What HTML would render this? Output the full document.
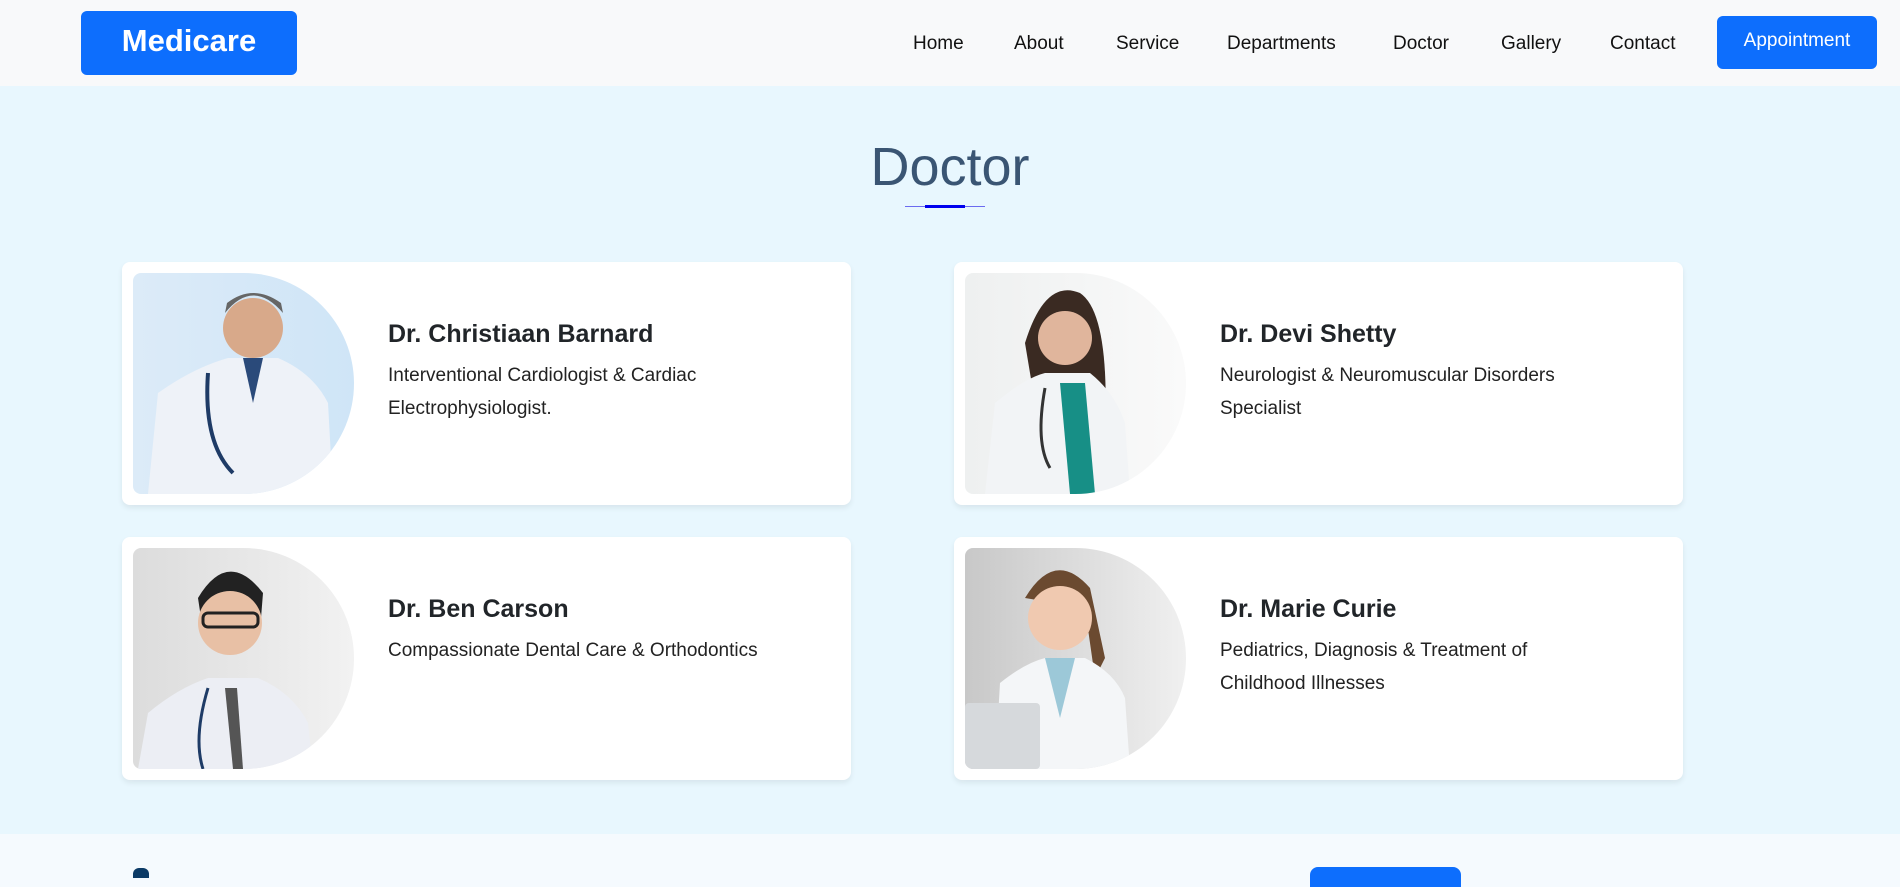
<!DOCTYPE html>
<html><head><meta charset="utf-8"><style>
*{box-sizing:border-box;margin:0;padding:0}
body{width:1900px;height:874px;overflow:hidden;font-family:"Segoe UI","Liberation Sans",sans-serif;background:#f5fafe;position:relative}
.nav{position:absolute;left:0;top:0;width:1900px;height:86px;background:#f8f9fa}
.logo{position:absolute;left:81px;top:11px;width:216px;height:64px;background:#0d6efd;border-radius:6px;color:#fff;font-weight:bold;font-size:31px;text-align:center;line-height:60px}
.nav a{position:absolute;top:28px;font-size:19px;color:#111;text-decoration:none;line-height:32px}
.btn{position:absolute;left:1717px;top:16px;width:160px;height:53px;background:#0d6efd;border-radius:6px;color:#fff;font-size:19px;text-align:center;line-height:50px}
.sec{position:absolute;left:0;top:86px;width:1900px;height:748px;background:#e8f7fe}
h1{position:absolute;left:0;width:1900px;top:132px;text-align:center;font-weight:300;font-size:54px;color:#3a5573;line-height:70px;font-family:"Segoe UI Light","Liberation Sans",sans-serif}
.l1{position:absolute;left:905px;top:206px;width:80px;height:1px;background:#6b6bf0}
.l2{position:absolute;left:925px;top:205px;width:40px;height:3px;background:#0000ee}
.card{position:absolute;width:729px;height:243px;background:#fff;border-radius:8px;box-shadow:0 3px 6px rgba(0,0,0,.07)}
.img{position:absolute;left:11px;top:11px;width:221px;height:221px;border-radius:8px 50% 50% 8px/8px 50% 50% 8px;overflow:hidden}
.name{position:absolute;left:266px;top:54px;font-size:25px;font-weight:bold;color:#212529;line-height:36px}
.desc{position:absolute;left:266px;top:97px;font-size:19px;color:#222;line-height:33px;width:360px}
</style></head><body>
<div class="nav">
<div class="logo">Medicare</div>
<a style="left:913px">Home</a><a style="left:1014px">About</a><a style="left:1116px">Service</a><a style="left:1227px">Departments</a><a style="left:1393px">Doctor</a><a style="left:1501px">Gallery</a><a style="left:1610px">Contact</a>
<div class="btn">Appointment</div>
</div>
<div class="sec"></div>
<h1>Doctor</h1>
<div class="l1"></div><div class="l2"></div>

<div class="card" style="left:122px;top:262px">
<div class="img" style="background:linear-gradient(90deg,#dcebf8,#cfe5f7)"><svg width="221" height="221"><circle cx="120" cy="55" r="30" fill="#d8a98a"/><path d="M92 40 Q120 5 150 40 L148 30 Q120 10 94 30Z" fill="#666"/><path d="M15 221 L25 120 Q60 95 95 85 L145 85 Q180 100 195 130 L200 221Z" fill="#eef2f8"/><path d="M110 85 L120 130 L130 85Z" fill="#2a4a7a"/><path d="M75 100 Q70 170 100 200" stroke="#1e3b66" stroke-width="4" fill="none"/></svg></div>
<div class="name">Dr. Christiaan Barnard</div>
<div class="desc">Interventional Cardiologist &amp; Cardiac Electrophysiologist.</div>
</div>

<div class="card" style="left:954px;top:262px">
<div class="img" style="background:linear-gradient(90deg,#eef0f0,#fafafa)"><svg width="221" height="221"><path d="M60 70 Q80 5 115 20 Q145 40 140 160 L75 160Z" fill="#3a2a22"/><circle cx="100" cy="65" r="27" fill="#e0b59c"/><path d="M20 221 L30 130 Q60 105 80 100 L125 100 Q150 120 160 150 L165 221Z" fill="#f2f4f6"/><path d="M95 110 L105 221 L130 221 L120 110Z" fill="#178f86"/><path d="M80 115 Q70 170 85 195" stroke="#333" stroke-width="3" fill="none"/></svg></div>
<div class="name">Dr. Devi Shetty</div>
<div class="desc">Neurologist &amp; Neuromuscular Disorders Specialist</div>
</div>

<div class="card" style="left:122px;top:537px">
<div class="img" style="background:linear-gradient(90deg,#dcdcdc,#f2f2f2)"><svg width="221" height="221"><path d="M65 50 Q95 0 130 45 L128 70 L68 70Z" fill="#222"/><circle cx="97" cy="75" r="32" fill="#e8c0a5"/><rect x="70" y="65" width="55" height="14" rx="5" fill="none" stroke="#222" stroke-width="3"/><path d="M5 221 L15 165 Q45 140 75 130 L125 130 Q160 145 175 175 L180 221Z" fill="#eceef4"/><path d="M92 140 L100 221 L110 221 L104 140Z" fill="#555"/><path d="M75 140 Q60 190 70 221" stroke="#1e3b66" stroke-width="3" fill="none"/></svg></div>
<div class="name">Dr. Ben Carson</div>
<div class="desc" style="width:440px">Compassionate Dental Care &amp; Orthodontics</div>
</div>

<div class="card" style="left:954px;top:537px">
<div class="img" style="background:linear-gradient(90deg,#c8c8c8,#f0f0f0)"><svg width="221" height="221"><path d="M60 50 Q90 0 125 40 L140 110 L130 130 L120 60Z" fill="#6b4a30"/><circle cx="95" cy="70" r="32" fill="#f0c9b0"/><path d="M30 221 L35 135 Q60 115 80 110 L120 110 Q150 125 160 150 L165 221Z" fill="#f4f6f8"/><path d="M80 110 L95 170 L110 110Z" fill="#9cc8d8"/><rect x="0" y="155" width="75" height="66" rx="4" fill="#d6d9dc"/></svg></div>
<div class="name">Dr. Marie Curie</div>
<div class="desc">Pediatrics, Diagnosis &amp; Treatment of Childhood Illnesses</div>
</div>

<div style="position:absolute;left:133px;top:868px;width:16px;height:10px;background:#0b3a66;border-radius:6px 6px 0 0"></div>
<div style="position:absolute;left:1310px;top:867px;width:151px;height:20px;background:#0d6efd;border-radius:8px 8px 0 0"></div>
</body></html>
